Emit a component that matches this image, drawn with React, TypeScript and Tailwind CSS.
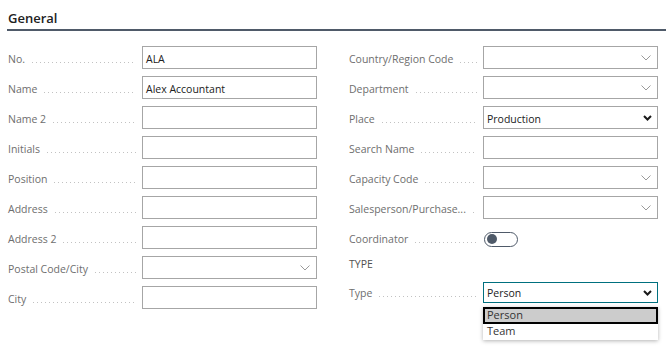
import React from "react";

const font = { fontFamily: '"Open Sans", "Noto Sans", sans-serif' };

function Leader() {
  return (
    <div className="flex-1 ml-[7px] mr-[6px] h-px mt-[5px] bg-[linear-gradient(to_right,#c2c2c2_1px,transparent_1px)] bg-[length:4px_1px] bg-repeat-x" />
  );
}

function LightChevron() {
  return (
    <svg width="10" height="6" viewBox="0 0 10 6" className="absolute right-[6px] top-1/2 -translate-y-1/2">
      <path d="M0.5 0.5 L5 5 L9.5 0.5" fill="none" stroke="#9a9a9a" strokeWidth="1" />
    </svg>
  );
}

function BoldChevron() {
  return (
    <svg width="9" height="6" viewBox="0 0 9 6" className="absolute right-[5px] top-1/2 -translate-y-1/2">
      <path d="M1 1 L4.5 4.5 L8 1" fill="none" stroke="#1a1a1a" strokeWidth="2" />
    </svg>
  );
}

type Kind = "text" | "lookup" | "select" | "toggle";

function Row({ label, value, kind = "text" }: { label: string; value?: string; kind?: Kind }) {
  return (
    <div className="flex items-center h-[23px]">
      <div className="w-[134px] flex items-center shrink-0 pt-[4px]">
        <span className="text-[10.5px] text-[#6e6e6e] whitespace-nowrap">{label}</span>
        <Leader />
      </div>
      {kind === "toggle" ? (
        <div className="w-[175px] flex items-center">
          <div className="w-[34px] h-[15px] mt-[3px] ml-px rounded-full border-[1.5px] border-[#4f5a69] flex items-center pl-[2px]">
            <div className="w-[10px] h-[10px] rounded-full bg-[#4f5a69]" />
          </div>
        </div>
      ) : (
        <div className="relative w-[175px] h-[23px] border border-[#a6a6a6] bg-white flex items-center pl-[3px]">
          <span className="text-[10.5px] text-[#212121] pt-[4px]">{value}</span>
          {kind === "lookup" && <LightChevron />}
          {kind === "select" && <BoldChevron />}
        </div>
      )}
    </div>
  );
}

export default function App() {
  return (
    <div style={font} className="w-[666px] h-[351px] bg-white overflow-hidden relative">
      <div className="pl-[7px] pt-[9px]">
        <div className="pl-px text-[13px] font-semibold text-[#212121] leading-[18px]">General</div>
        <div className="h-[2px] mt-[2px] bg-[#4f5a69]" />
      </div>
      <div className="flex pl-[8px] pt-[15px]">
        <div className="w-[309px] flex flex-col gap-[7px]">
          <Row label="No." value="ALA" />
          <Row label="Name" value="Alex Accountant" />
          <Row label="Name 2" />
          <Row label="Initials" />
          <Row label="Position" />
          <Row label="Address" />
          <Row label="Address 2" />
          <Row label="Postal Code/City" kind="lookup" />
          <Row label="City" />
        </div>
        <div className="ml-[32px] w-[310px] flex flex-col">
          <div className="flex flex-col gap-[7px]">
            <Row label="Country/Region Code" kind="lookup" />
            <Row label="Department" kind="lookup" />
            <Row label="Place" value="Production" kind="select" />
            <Row label="Search Name" />
            <Row label="Capacity Code" kind="lookup" />
            <Row label="Salesperson/Purchase..." kind="lookup" />
            <Row label="Coordinator" kind="toggle" />
          </div>
          <div className="mt-[8px] text-[10.5px] text-[#505050] leading-[15px]">TYPE</div>
          <div className="mt-[10px] flex items-center h-[21px] relative">
            <div className="w-[134px] flex items-center shrink-0 pt-[3px]">
              <span className="text-[10.5px] text-[#6e6e6e]">Type</span>
              <Leader />
            </div>
            <div className="relative w-[175px] h-[21px] border border-[#00707f] bg-white flex items-center pl-[3px]">
              <span className="text-[10.5px] text-[#212121] pt-[3px]">Person</span>
              <BoldChevron />
            </div>
            <div className="absolute left-[134px] top-[25px] w-[175px] bg-white shadow-[0_1px_4px_rgba(0,0,0,0.3)] pb-[1px]">
              <div className="h-[17px] bg-[#cccccc] border-2 border-black flex items-center pl-[2px] text-[11px] text-[#333333]">Person</div>
              <div className="h-[15px] flex items-center pl-[4px] text-[11px] text-[#333333]">Team</div>
            </div>
          </div>
        </div>
      </div>
    </div>
  );
}
